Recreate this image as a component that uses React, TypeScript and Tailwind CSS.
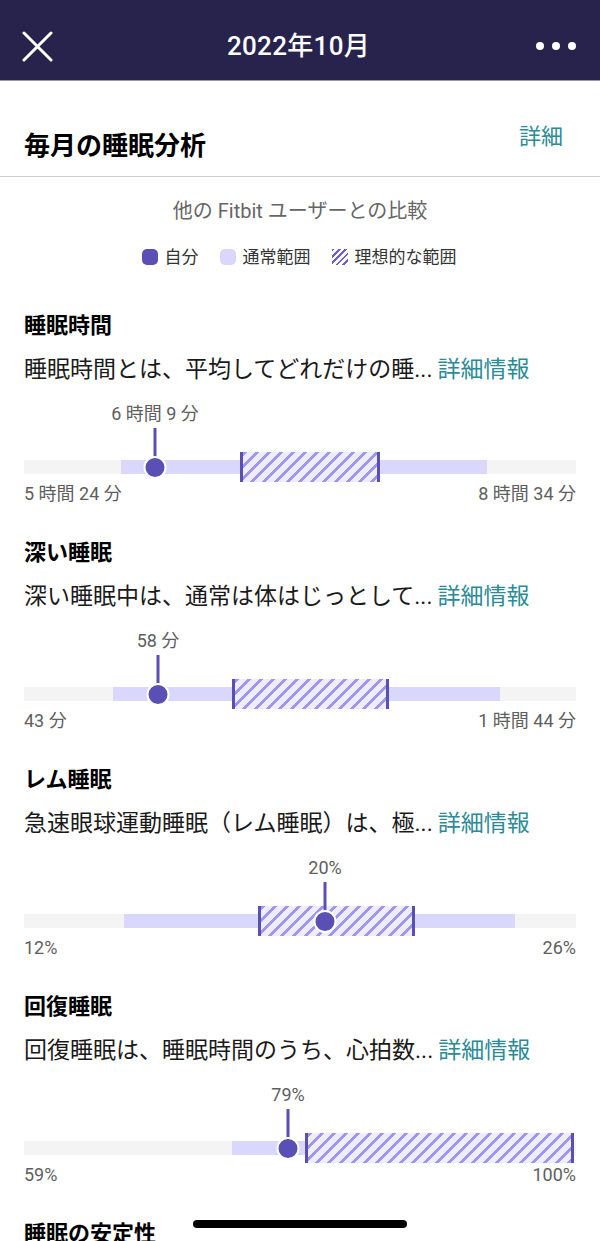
import React from 'react';

type Metric = {
    title: string;
    desc: string;
    value: string;
    min: string;
    max: string;
    normal: [number, number];
    ideal: [number, number];
    dot: number;
};

// bar coordinates are px along a 552px track
const TRACK = 552;

const metrics: Metric[] = [
    {
        title: '睡眠時間',
        desc: '睡眠時間とは、平均してどれだけの睡...',
        value: '6 時間 9 分',
        min: '5 時間 24 分',
        max: '8 時間 34 分',
        normal: [97, 463],
        ideal: [216, 356],
        dot: 131,
    },
    {
        title: '深い睡眠',
        desc: '深い睡眠中は、通常は体はじっとして...',
        value: '58 分',
        min: '43 分',
        max: '1 時間 44 分',
        normal: [89, 476],
        ideal: [208, 365],
        dot: 134,
    },
    {
        title: 'レム睡眠',
        desc: '急速眼球運動睡眠（レム睡眠）は、極...',
        value: '20%',
        min: '12%',
        max: '26%',
        normal: [100, 491],
        ideal: [234, 391],
        dot: 301,
    },
    {
        title: '回復睡眠',
        desc: '回復睡眠は、睡眠時間のうち、心拍数...',
        value: '79%',
        min: '59%',
        max: '100%',
        normal: [208, 281],
        ideal: [281, 550],
        dot: 264,
    },
];

const pct = (v: number) => `${(v / TRACK) * 100}%`;

const RangeBar: React.FC<{ m: Metric }> = ({ m }) => (
    <div className="relative h-[104px] mt-[18px]">
        <div
            className="absolute top-0 -translate-x-1/2 text-[18px] leading-[24px] text-[#5e5e5e] whitespace-nowrap"
            style={{ left: pct(m.dot) }}
        >
            {m.value}
        </div>
        <div className="absolute top-[58px] left-0 right-0 h-[14px] bg-[#f4f4f4]" />
        <div
            className="absolute top-[58px] h-[14px] bg-[#d9d7fb]"
            style={{ left: pct(m.normal[0]), width: pct(m.normal[1] - m.normal[0]) }}
        />
        <div
            className="absolute top-[50px] h-[30px] border-x-[3px] border-[#5a4fb4] bg-[repeating-linear-gradient(135deg,#a094f4_0px,#a094f4_3px,#eeedfd_3px,#eeedfd_8.5px)]"
            style={{ left: pct(m.ideal[0]), width: pct(m.ideal[1] - m.ideal[0]) }}
        />
        <div
            className="absolute top-[26px] h-[30px] w-[3px] -translate-x-1/2 bg-[#5a4fb4]"
            style={{ left: pct(m.dot) }}
        />
        <div
            className="absolute top-[54px] w-[23px] h-[23px] -translate-x-1/2 rounded-full bg-[#5a4fb4] border-2 border-white"
            style={{ left: pct(m.dot) }}
        />
        <div className="absolute top-[80px] left-0 right-0 flex justify-between text-[18px] leading-[24px] text-[#5e5e5e]">
            <span>{m.min}</span>
            <span>{m.max}</span>
        </div>
    </div>
);

const MetricSection: React.FC<{ m: Metric }> = ({ m }) => (
    <div className="px-6 pb-[33px]">
        <h3 className="text-[22px] leading-[28px] font-bold text-black">{m.title}</h3>
        <p className="mt-[16px] text-[23px] leading-[28px] text-[#1a1a1a] whitespace-nowrap">
            {m.desc}
            <span className="ml-[5px] text-[#2b8b96]">詳細情報</span>
        </p>
        <RangeBar m={m} />
    </div>
);

export default function App() {
    return (
        <div className="relative h-[1241px] w-[600px] overflow-hidden bg-white font-['Roboto','Noto_Sans_CJK_JP',sans-serif]">
            <header className="h-[81px] bg-[#28234d] border-b border-[#9a98a8] flex items-center justify-between px-[22px] pt-[12px]">
                <svg width="31" height="31" viewBox="0 0 31 31" fill="none" stroke="white" strokeWidth="3" strokeLinecap="round">
                    <path d="M2 2 L29 29 M29 2 L2 29" />
                </svg>
                <h1 className="text-[26px] font-medium text-white pl-[8px] tracking-[0.3px]">2022年10月</h1>
                <div className="flex gap-[8px] pr-[2px]">
                    <span className="w-[8px] h-[8px] rounded-full bg-white" />
                    <span className="w-[8px] h-[8px] rounded-full bg-white" />
                    <span className="w-[8px] h-[8px] rounded-full bg-white" />
                </div>
            </header>

            <div className="flex justify-between items-start px-6 pt-[41px] pb-[15px] border-b border-[#cfcfcf]">
                <h2 className="mt-[9px] text-[26px] leading-[30px] font-bold text-black">毎月の睡眠分析</h2>
                <a className="text-[22px] leading-[30px] text-[#2b8b96] pr-[13px]">詳細</a>
            </div>

            <p className="mt-[22px] text-center text-[20px] leading-[24px] text-[#666]">他の Fitbit ユーザーとの比較</p>

            <div className="mt-[22px] flex justify-center items-center gap-[21px] text-[17px] leading-[24px] text-[#333] pr-[2px]">
                <div className="flex items-center gap-[7px]">
                    <span className="w-[16px] h-[16px] rounded-[5px] bg-[#5a4fb4]" />
                    自分
                </div>
                <div className="flex items-center gap-[7px]">
                    <span className="w-[16px] h-[16px] rounded-[5px] bg-[#d9d7fb]" />
                    通常範囲
                </div>
                <div className="flex items-center gap-[7px]">
                    <span className="w-[16px] h-[16px] bg-[repeating-linear-gradient(135deg,#6b5fd0_0px,#6b5fd0_2px,#ffffff_2px,#ffffff_4.5px)]" />
                    理想的な範囲
                </div>
            </div>

            <div className="mt-[43px]">
                {metrics.map(m => (
                    <MetricSection key={m.title} m={m} />
                ))}
                <div className="px-6">
                    <h3 className="text-[22px] leading-[28px] font-bold text-black">睡眠の安定性</h3>
                </div>
            </div>

            <div className="absolute bottom-[13px] left-[193px] w-[214px] h-[8px] rounded-full bg-black" />
        </div>
    );
}
